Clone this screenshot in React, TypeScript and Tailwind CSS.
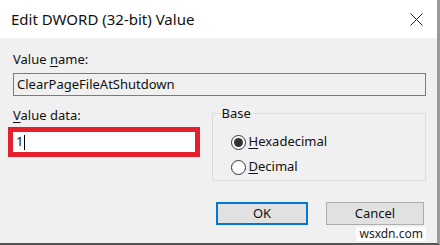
import React from 'react';

const font = { fontFamily: '"Noto Sans", "Liberation Sans", sans-serif' };

const Radio: React.FC<{ checked?: boolean; accel: string; rest: string }> = ({ checked, accel, rest }) => (
  <div className="flex items-center h-[20px]">
    <div className="w-[15px] h-[15px] rounded-full border border-[#333] bg-white flex items-center justify-center">
      {checked && <div className="w-[9px] h-[9px] rounded-full bg-[#333]" />}
    </div>
    <span className="ml-[3px] text-[13px] text-[#111]">
      <span className="underline underline-offset-2">{accel}</span>
      {rest}
    </span>
  </div>
);

export default function App() {
  return (
    <div className="w-[440px] h-[245px] bg-[#f0f0f0] border-r-[3px] border-r-[#9a9a9a] border-b-2 border-b-[#555] flex flex-col overflow-hidden" style={font}>
      {/* title bar */}
      <div className="h-[38px] bg-white flex items-center justify-between pl-[11px] pr-[14px] shrink-0">
        <span className="text-[15px] text-[#111] leading-none">Edit DWORD (32-bit) Value</span>
        <svg width="13" height="13" viewBox="0 0 13 13" className="mt-[1px]">
          <path d="M0.5 0.5 L12.5 12.5 M12.5 0.5 L0.5 12.5" stroke="#222" strokeWidth="1" fill="none" />
        </svg>
      </div>

      <div className="flex flex-col pl-[13px] pr-[11px] pt-[13px]">
        <span className="text-[13px] leading-[16px] text-[#111]">
          Value <span className="underline underline-offset-2">n</span>ame:
        </span>
        <div className="mt-[6px] h-[23px] w-[413px] border border-[#7a7a7a] bg-[#f0f0f0] flex items-center pl-[3px] text-[13px] text-[#111]">
          ClearPageFileAtShutdown
        </div>

        <div className="flex mt-[11px]">
          <div className="flex flex-col w-[199px]">
            <span className="text-[13px] leading-[16px] text-[#111]">
              <span className="underline underline-offset-2">V</span>alue data:
            </span>
            <div className="-ml-[5px] mt-[4px] w-[192px] h-[30px] border-[5px] border-[#e3202b] bg-white flex items-center pl-[3px] text-[13px] text-[#111]">
              <span>1</span>
              <span className="w-px h-[15px] bg-black ml-[1px]" />
            </div>
          </div>

          <div className="relative mt-[6px] w-[215px] h-[68px] border border-[#dcdcdc] pl-[18px] pt-[18px]">
            <span className="absolute -top-[9px] left-[7px] px-[2px] bg-[#f0f0f0] text-[13px] leading-[16px] text-[#111]">Base</span>
            <div className="flex flex-col gap-[5px]">
              <Radio checked accel="H" rest="exadecimal" />
              <Radio accel="D" rest="ecimal" />
            </div>
          </div>
        </div>

        <div className="flex justify-end gap-[18px] mt-[21px] pr-[2px]">
          <button className="w-[92px] h-[23px] border-2 border-[#0078d7] bg-[#e1e1e1] text-[13px] text-[#111] flex items-center justify-center">
            OK
          </button>
          <div className="flex flex-col items-end">
            <button className="w-[98px] h-[23px] border border-[#adadad] bg-[#e1e1e1] text-[13px] text-[#111] flex items-center justify-center">
              Cancel
            </button>
            <span className="mt-[2px] mr-[-2px] px-[3px] bg-white text-[12px] leading-[14px] text-[#222]">wsxdn.com</span>
          </div>
        </div>
      </div>
    </div>
  );
}
